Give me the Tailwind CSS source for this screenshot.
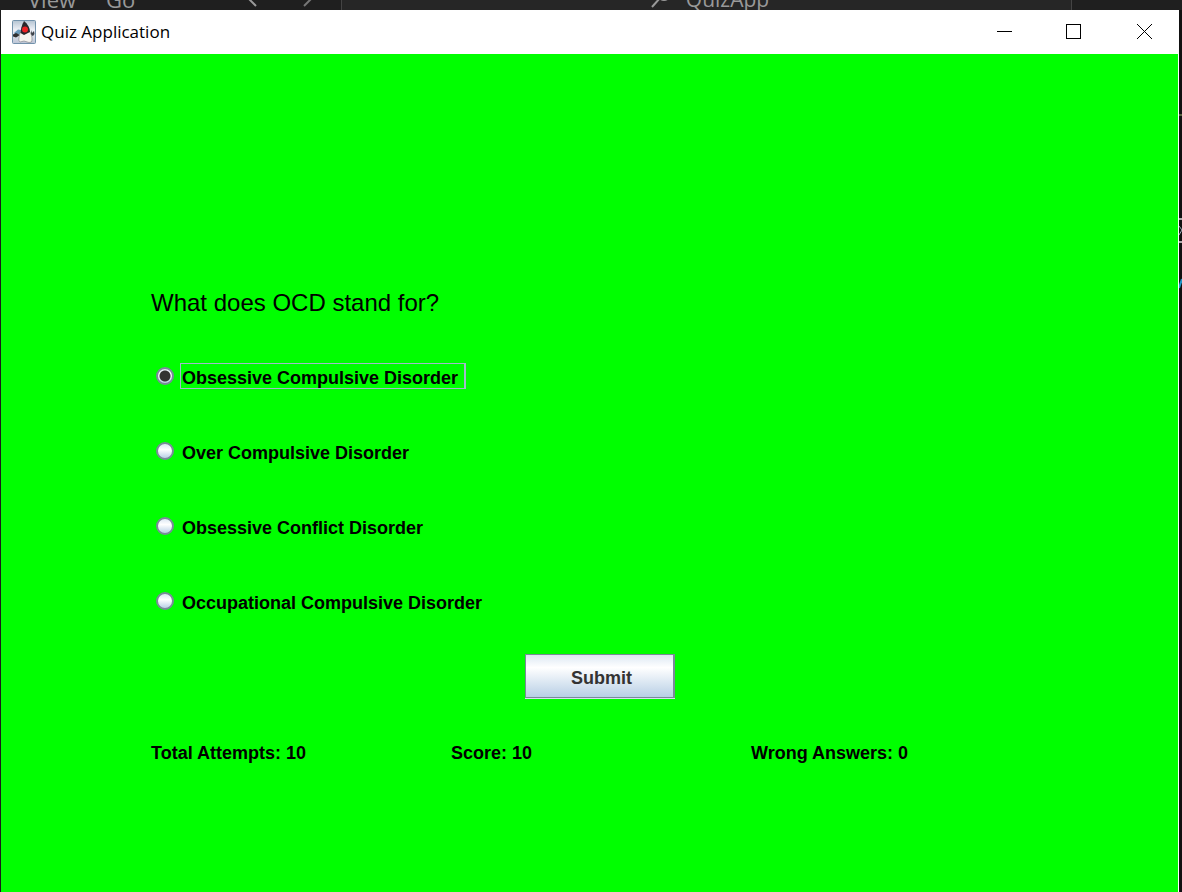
<!DOCTYPE html>
<html lang="en">
<head>
<meta charset="utf-8">
<title>Quiz Application</title>
<script src="https://cdn.jsdelivr.net/npm/@tailwindcss/browser@4"></script>
</head>
<body class="flex h-screen flex-col overflow-hidden bg-[#1a1a1a] font-['Liberation_Sans',Arial,sans-serif]">
  <!-- Editor window showing behind the quiz -->
  <div class="flex h-[10px] shrink-0 items-end overflow-hidden bg-[#1f1f1f] font-['Open_Sans','Noto_Sans',sans-serif] text-[22px] leading-[22px] text-[#999]">
    <div class="flex h-5 w-[341px] shrink-0 items-end pl-7">
      <span class="w-[78px]">View</span>
      <span class="w-[140px]">Go</span>
      <svg class="h-5 w-3" viewBox="0 0 12 20" fill="none" stroke="#999" stroke-width="2"><path d="M10 16 1 7l9-9"/></svg>
      <svg class="ml-[44px] h-5 w-3" viewBox="0 0 12 20" fill="none" stroke="#777" stroke-width="2"><path d="m2 16 9-9"/></svg>
    </div>
    <div class="flex h-5 flex-1 items-end justify-center border-x border-[#444] bg-[#262626] pl-[6px] text-[21px]">
      <svg class="mr-4 h-5 w-5" viewBox="0 0 20 20" fill="none" stroke="#999" stroke-width="2"><path d="m2 17 8-9"/><circle cx="14" cy="4" r="6"/></svg>
      <span>QuizApp</span>
    </div>
    <div class="w-[110px]"></div>
  </div>

  <div class="flex min-h-0 flex-1 pl-px">
    <div class="flex min-w-0 flex-1 flex-col bg-white">
      <header class="flex h-11 shrink-0 items-center pl-[11px]">
        <svg class="h-6 w-6" viewBox="0 0 24 24" aria-hidden="true">
          <defs><linearGradient id="tile" x1="0" y1="0" x2="0" y2="1"><stop offset="0" stop-color="#b4c4d2"/><stop offset=".4" stop-color="#edf0f6"/><stop offset="1" stop-color="#bcc5d5"/></linearGradient></defs>
          <rect x=".5" y=".5" width="23" height="23" rx="1" fill="url(#tile)" stroke="#7292ab"/>
          <path d="M2 13 6 9.500l3 .5-1 4-4 1z" fill="#6a9abb"/>
          <path d="M1 14.500 4 13l4 2-4 2.500-3-1z" fill="#303030"/>
          <path d="m19 10 1 3 2-2 .5 3-1.500 2-2-1z" fill="#3d4248"/>
          <path d="M8.500 12C7 16 6 21 8 22l4-1 5 1.500 2.500-.5c1.500-4-.5-9-2.500-11z" fill="#f5f4ef" stroke="#777b80" stroke-width=".6"/>
          <path d="M12 1c-1.500 3-3 6-3.500 12l3.500 2 6-3c0-4-2-8-6-11z" fill="#29282b"/>
          <circle cx="13" cy="9.500" r="3" fill="#ed2224"/>
        </svg>
        <h1 class="ml-[5px] flex-1 font-['Open_Sans','Noto_Sans',sans-serif] text-[17px] leading-6 text-black">Quiz Application</h1>
        <button type="button" aria-label="Minimize" class="flex h-11 w-[70px] items-center justify-center pb-px"><svg class="h-[15px] w-[15px]" viewBox="0 0 15 15" shape-rendering="crispEdges" stroke="#000"><path d="M0 7.500h15"/></svg></button>
        <button type="button" aria-label="Maximize" class="flex h-11 w-[70px] items-center justify-center pb-px pr-[2px]"><svg class="h-[15px] w-[15px]" viewBox="0 0 15 15" shape-rendering="crispEdges" fill="none" stroke="#000"><path d="M.5.5h14v14H.5z"/></svg></button>
        <button type="button" aria-label="Close" class="flex h-11 w-[70px] items-center justify-center pb-px"><svg class="h-[15px] w-[15px]" viewBox="0 0 15 15" stroke="#000"><path d="m0 0 15 15M15 0 0 15"/></svg></button>
      </header>

      <main class="mr-px flex-1 bg-[#00ff00] pt-[234px] pl-[150px] text-[18px] font-bold text-black">
        <form>
          <fieldset>
            <legend class="text-[24px] leading-[30px] font-normal">What does OCD stand for?</legend>
            <div class="mt-[45px] flex flex-col items-start gap-[49px] pl-[5px]">
              <label class="flex h-[26px] items-center gap-[6px]">
                <input type="radio" name="answer" checked class="h-[18px] w-[18px] appearance-none rounded-full border-2 border-[#7a8a99] bg-[radial-gradient(circle,#333_5px,transparent_6px),linear-gradient(#dde8f3,#ffffff_40%,#b8cfe5)]">
                <span class="h-[26px] min-w-[286px] border border-r-2 border-[#a3b8cc] pt-[2px] pl-px leading-6">Obsessive Compulsive Disorder</span>
              </label>
              <label class="flex h-[26px] items-center gap-[6px]">
                <input type="radio" name="answer" class="h-[18px] w-[18px] appearance-none rounded-full border-2 border-[#7a8a99] bg-linear-to-b from-[#dde8f3] via-white via-40% to-[#b8cfe5]">
                <span class="h-[26px] border border-transparent pt-[2px] pl-px leading-6">Over Compulsive Disorder</span>
              </label>
              <label class="flex h-[26px] items-center gap-[6px]">
                <input type="radio" name="answer" class="h-[18px] w-[18px] appearance-none rounded-full border-2 border-[#7a8a99] bg-linear-to-b from-[#dde8f3] via-white via-40% to-[#b8cfe5]">
                <span class="h-[26px] border border-transparent pt-[2px] pl-px leading-6">Obsessive Conflict Disorder</span>
              </label>
              <label class="flex h-[26px] items-center gap-[6px]">
                <input type="radio" name="answer" class="h-[18px] w-[18px] appearance-none rounded-full border-2 border-[#7a8a99] bg-linear-to-b from-[#dde8f3] via-white via-40% to-[#b8cfe5]">
                <span class="h-[26px] border border-transparent pt-[2px] pl-px leading-6">Occupational Compulsive Disorder</span>
              </label>
            </div>
          </fieldset>
          <button type="button" class="mt-10 ml-[374px] block h-11 w-[150px] border border-r-2 border-[#7a8a99] bg-linear-to-b from-[#dde8f3] via-white via-30% to-[#b8cfe5] pt-1 pl-1 text-[#333] shadow-[0_1px_0_#d5e2ef]">Submit</button>
        </form>
        <div class="mt-[43px] grid grid-cols-[300px_300px_1fr] leading-6">
          <p>Total Attempts: 10</p>
          <p>Score: 10</p>
          <p>Wrong Answers: 0</p>
        </div>
      </main>
    </div>
    <!-- Editor edge visible to the right -->
    <div class="flex w-[3px] shrink-0 flex-col overflow-hidden bg-[#111]">
      <div class="mt-[104px] h-[2px] bg-[#56623f]"></div>
      <div class="mt-[102px] h-[2px] bg-[#aaa]"></div>
      <svg class="mt-[5px] h-[12px] w-[3px]" viewBox="0 0 3 12" fill="none" stroke="#9aacb8"><path d="m0 1 3 4-3 5"/></svg>
      <div class="mt-[4px] h-[2px] bg-[#aaa]"></div>
      <svg class="mt-[34px] h-[12px] w-[3px]" viewBox="0 0 3 12" stroke="#2196c8" stroke-width="2"><path d="m0 11 3-9"/></svg>
    </div>
  </div>
</body>
</html>
